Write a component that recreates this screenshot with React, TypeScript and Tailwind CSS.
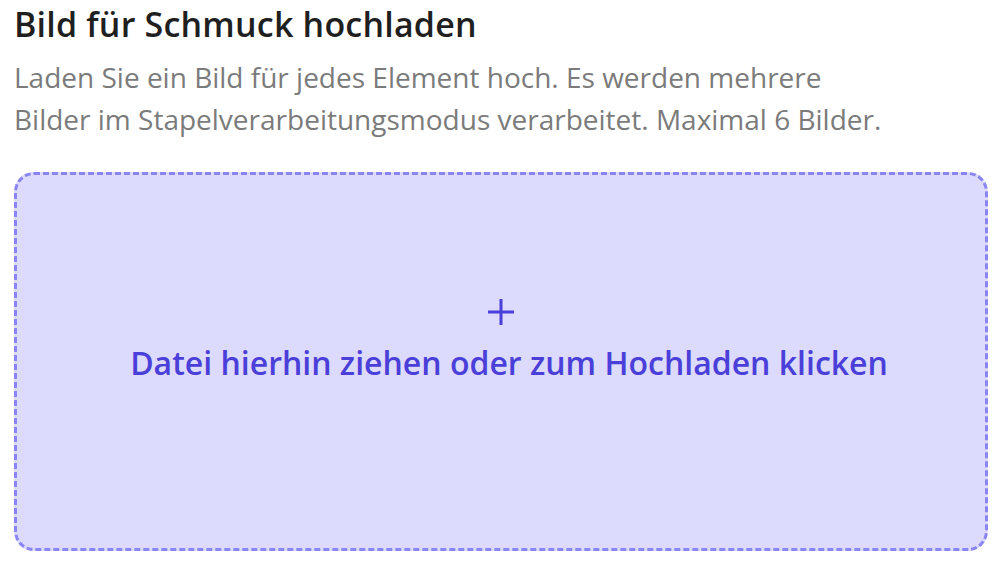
export default function App() {
  return (
    <div
      className="min-h-screen bg-white px-[14px] pt-[4px]"
      style={{ fontFamily: '"Open Sans", "Noto Sans", sans-serif' }}
    >
      <h2 className="text-[34px] font-semibold leading-[40px] tracking-[0.2px] text-[#1f1f1f]">
        Bild für Schmuck hochladen
      </h2>
      <p className="mt-[12px] text-[28px] leading-[42px] text-[#7b7b7b]">
        Laden Sie ein Bild für jedes Element hoch. Es werden mehrere
        <br />
        Bilder im Stapelverarbeitungsmodus verarbeitet. Maximal 6 Bilder.
      </p>
      <div className="mt-[32px] flex h-[379px] w-[974px] cursor-pointer flex-col items-center justify-center rounded-[20px] border-[3px] border-dashed border-[#8a85f3] bg-[#dcdafd] pb-[42px]">
        <svg width="28" height="28" viewBox="0 0 28 28" className="text-[#4a3fd8]">
          <path d="M14 1v26M1 14h26" stroke="currentColor" strokeWidth="3" strokeLinecap="butt" />
        </svg>
        <span className="ml-[16px] mt-[17px] text-[32px] font-semibold leading-[40px] text-[#4a3fd8]">
          Datei hierhin ziehen oder zum Hochladen klicken
        </span>
      </div>
    </div>
  );
}
